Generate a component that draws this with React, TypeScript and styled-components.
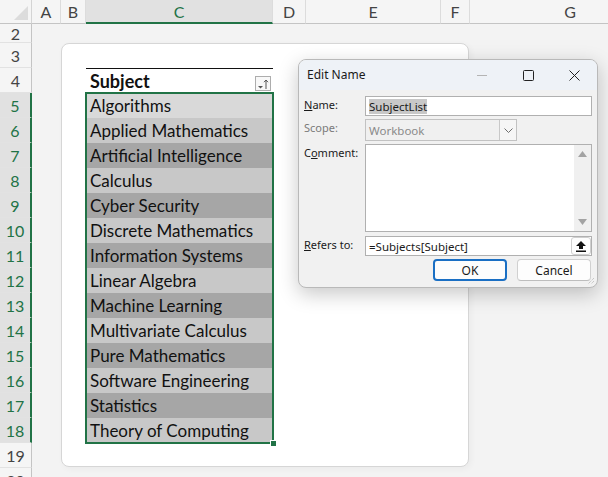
import styled, { createGlobalStyle } from "styled-components";

const GREEN = "#217346";

const subjects = [
  "Algorithms",
  "Applied Mathematics",
  "Artificial Intelligence",
  "Calculus",
  "Cyber Security",
  "Discrete Mathematics",
  "Information Systems",
  "Linear Algebra",
  "Machine Learning",
  "Multivariate Calculus",
  "Pure Mathematics",
  "Software Engineering",
  "Statistics",
  "Theory of Computing",
];

const columns = [
  { label: "A", width: 29 },
  { label: "B", width: 25 },
  { label: "C", width: 187, selected: true },
  { label: "D", width: 33 },
  { label: "E", width: 135 },
  { label: "F", width: 29 },
  { label: "G", width: 201 },
];

const rows = Array.from({ length: 19 }, (_, i) => i + 2);

const GlobalStyle = createGlobalStyle`
  * {
    box-sizing: border-box;
  }

  html,
  body {
    margin: 0;
    height: 100%;
    overflow: hidden;
  }

  body {
    background: #f3f3f3;
    font-family: Lato, "Liberation Sans", sans-serif;
  }
`;

const Sheet = styled.div`
  position: relative;
  width: 608px;
  height: 477px;
  overflow: hidden;
  background: #f3f3f3;
`;

const ColumnBar = styled.div`
  display: flex;
  height: 24px;
  background: #f5f5f5;
`;

const Corner = styled.div`
  width: 32px;
  flex: none;
  border-right: 1px solid #d4d4d4;
  border-bottom: 1px solid #c4c4c4;
  display: flex;
  align-items: flex-end;
  justify-content: flex-end;
  padding: 0 3px 3px 0;
`;

const HeadCell = styled.div<{ $selected?: boolean; $width: number }>`
  width: ${({ $width }) => $width}px;
  flex: none;
  display: flex;
  align-items: center;
  justify-content: center;
  font-size: 16px;
  color: ${({ $selected }) => ($selected ? GREEN : "#444")};
  background: ${({ $selected }) => ($selected ? "#e1e1e1" : "transparent")};
  border-right: 1px solid #dcdcdc;
  border-bottom: ${({ $selected }) =>
    $selected ? `2px solid ${GREEN}` : "1px solid #c4c4c4"};
`;

const Body = styled.div`
  display: flex;
`;

const RowHeader = styled.div`
  width: 32px;
  flex: none;
  display: flex;
  flex-direction: column;
  background: #f5f5f5;
`;

const RowNum = styled.div<{ $selected?: boolean; $short?: boolean }>`
  height: ${({ $short }) => ($short ? 19 : 25)}px;
  flex: none;
  display: flex;
  align-items: center;
  justify-content: center;
  font-size: 16px;
  color: ${({ $selected }) => ($selected ? GREEN : "#444")};
  background: ${({ $selected }) => ($selected ? "#e1e1e1" : "#f5f5f5")};
  border-bottom: 1px solid #e2e2e2;
  border-right: ${({ $selected }) =>
    $selected ? `2px solid ${GREEN}` : "1px solid #c4c4c4"};
`;

const Canvas = styled.div`
  flex: 1;
  padding: 19px 0 0 29px;
`;

const Card = styled.div`
  width: 408px;
  height: 424px;
  background: #fff;
  border: 1px solid #d6d6d6;
  border-radius: 8px;
  box-shadow: 2px 2px 6px rgba(0, 0, 0, 0.04);
  padding: 24px 0 0 24px;
`;

const Table = styled.div`
  width: 187px;
  font-size: 17px;
  color: #111;
`;

const TableHead = styled.div`
  height: 25px;
  border-top: 1px solid #111;
  display: flex;
  align-items: center;
  justify-content: space-between;
  padding: 0 2px 0 4px;
  font-size: 18px;
  font-weight: 700;
`;

const FilterButton = styled.div`
  width: 16px;
  height: 15px;
  align-self: flex-end;
  margin-bottom: 2px;
  border: 1px solid #adadad;
  background: #f8f8f8;
  display: flex;
  align-items: center;
  justify-content: center;
`;

const DataBlock = styled.div`
  position: relative;
  outline: 2px solid ${GREEN};
  outline-offset: -1px;
`;

const DataRow = styled.div<{ $shade: string }>`
  height: 25px;
  line-height: 25px;
  padding-left: 4px;
  white-space: nowrap;
  background: ${({ $shade }) => $shade};
`;

const FillHandle = styled.div`
  position: absolute;
  right: -4px;
  bottom: -4px;
  width: 7px;
  height: 7px;
  background: ${GREEN};
  border: 1px solid #fff;
`;

const Dialog = styled.div`
  position: absolute;
  left: 298px;
  top: 59px;
  width: 300px;
  height: 229px;
  background: #f1f1f1;
  border: 1px solid #b9b9b9;
  border-radius: 8px;
  box-shadow: 0 6px 20px rgba(0, 0, 0, 0.22);
  overflow: hidden;
  font-family: "Noto Sans", "Open Sans", sans-serif;
  font-size: 11px;
  color: #1a1a1a;
`;

const TitleBar = styled.div`
  height: 30px;
  display: flex;
  align-items: center;
  background: #eef2f7;
`;

const TitleText = styled.div`
  flex: 1;
  padding: 0 0 2px 8px;
  font-size: 12px;
`;

const TitleButton = styled.div`
  width: 46px;
  height: 30px;
  display: flex;
  align-items: center;
  justify-content: center;
`;

const DialogBody = styled.div`
  padding: 6px 5px 0 5px;
  display: flex;
  flex-direction: column;
`;

const FieldRow = styled.div<{ $height: number; $gap: number }>`
  display: grid;
  grid-template-columns: 61px 1fr;
  height: ${({ $height }) => $height}px;
  margin-top: ${({ $gap }) => $gap}px;
`;

const Label = styled.div<{ $disabled?: boolean }>`
  padding-top: 1px;
  color: ${({ $disabled }) => ($disabled ? "#7a7a7a" : "#1a1a1a")};
`;

const TextBox = styled.div`
  display: flex;
  align-items: center;
  background: #fff;
  border: 1px solid #b0b0b0;
  padding-left: 3px;
  font-size: 11.5px;
`;

const Selected = styled.span`
  background: #c8c8c8;
`;

const Combo = styled.div`
  width: 152px;
  display: flex;
  align-items: center;
  border: 1px solid #c2c2c2;
  background: #f0f0f0;
  color: #8a8a8a;
  font-size: 11.5px;
  padding-left: 3px;
`;

const ComboText = styled.div`
  flex: 1;
`;

const ComboArrow = styled.div`
  width: 17px;
  height: 100%;
  border-left: 1px solid #c8c8c8;
  background: #f6f6f6;
  display: flex;
  align-items: center;
  justify-content: center;
`;

const Memo = styled.div`
  display: flex;
  justify-content: flex-end;
  background: #fff;
  border: 1px solid #b0b0b0;
`;

const ScrollTrack = styled.div`
  width: 17px;
  background: #f0f0f0;
  display: flex;
  flex-direction: column;
  justify-content: space-between;
  align-items: center;
  padding: 6px 0;
`;

const RefBox = styled(TextBox)`
  justify-content: space-between;
  padding-right: 0;
`;

const CollapseButton = styled.div`
  width: 20px;
  height: 18px;
  background: #fdfdfd;
  border: 1px solid #cfcfcf;
  border-radius: 3px;
  display: flex;
  align-items: center;
  justify-content: center;
`;

const ButtonRow = styled.div`
  display: flex;
  justify-content: flex-end;
  gap: 10px;
  margin-top: 3px;
  padding-right: 1px;
`;

const DialogButton = styled.div<{ $primary?: boolean }>`
  width: 74px;
  height: 22px;
  display: flex;
  align-items: center;
  justify-content: center;
  border-radius: 4px;
  background: #fdfdfd;
  font-size: 12px;
  border: ${({ $primary }) =>
    $primary ? "2px solid #1a6fc4" : "1px solid #d0d0d0"};
  border-bottom-color: ${({ $primary }) => ($primary ? "#1a6fc4" : "#bdbdbd")};
`;

const Grip = styled.svg`
  position: absolute;
  right: 2px;
  bottom: 2px;
`;

const shadeFor = (i: number) => {
  if (i === 0) return "#d9d9d9";
  return i % 2 === 1 ? "#c8c8c8" : "#a6a6a6";
};

export default function App() {
  return (
    <>
      <GlobalStyle />
      <Sheet>
        <ColumnBar>
          <Corner>
            <svg width="14" height="14" viewBox="0 0 14 14">
              <polygon points="0,14 14,0 14,14" fill="#dcdcdc" />
            </svg>
          </Corner>
          {columns.map((c) => (
            <HeadCell key={c.label} $width={c.width} $selected={c.selected}>
              {c.label}
            </HeadCell>
          ))}
        </ColumnBar>
        <Body>
          <RowHeader>
            {rows.map((r) => (
              <RowNum key={r} $short={r === 2} $selected={r >= 5 && r <= 18}>
                {r}
              </RowNum>
            ))}
          </RowHeader>
          <Canvas>
            <Card>
              <Table>
                <TableHead>
                  <span>Subject</span>
                  <FilterButton>
                    <svg width="12" height="12" viewBox="0 0 12 12">
                      <polygon points="1,8 6,8 3.5,10.5" fill="#555" />
                      <path d="M9 11V2M7 4.2L9 2l2 2.2" stroke="#555" strokeWidth="1" fill="none" />
                    </svg>
                  </FilterButton>
                </TableHead>
                <DataBlock>
                  {subjects.map((s, i) => (
                    <DataRow key={s} $shade={shadeFor(i)}>
                      {s}
                    </DataRow>
                  ))}
                  <FillHandle />
                </DataBlock>
              </Table>
            </Card>
          </Canvas>
        </Body>

        <Dialog>
          <TitleBar>
            <TitleText>Edit Name</TitleText>
            <TitleButton>
              <svg width="10" height="10" viewBox="0 0 10 10">
                <path d="M0 5.5h10" stroke="#b4b4b4" strokeWidth="1" />
              </svg>
            </TitleButton>
            <TitleButton>
              <svg width="11" height="11" viewBox="0 0 11 11">
                <rect x="0.5" y="0.5" width="10" height="10" rx="1" fill="none" stroke="#222" />
              </svg>
            </TitleButton>
            <TitleButton>
              <svg width="11" height="11" viewBox="0 0 11 11">
                <path d="M0.5 0.5l10 10M10.5 0.5l-10 10" stroke="#222" strokeWidth="1" />
              </svg>
            </TitleButton>
          </TitleBar>
          <DialogBody>
            <FieldRow $height={20} $gap={0}>
              <Label>
                <u>N</u>ame:
              </Label>
              <TextBox>
                <Selected>SubjectList</Selected>
              </TextBox>
            </FieldRow>
            <FieldRow $height={22} $gap={3}>
              <Label $disabled>Scope:</Label>
              <Combo>
                <ComboText>Workbook</ComboText>
                <ComboArrow>
                  <svg width="9" height="5" viewBox="0 0 9 5">
                    <path d="M0.5 0.5l4 4 4-4" stroke="#6e6e6e" fill="none" />
                  </svg>
                </ComboArrow>
              </Combo>
            </FieldRow>
            <FieldRow $height={88} $gap={3}>
              <Label>
                C<u>o</u>mment:
              </Label>
              <Memo>
                <ScrollTrack>
                  <svg width="9" height="6" viewBox="0 0 9 6">
                    <polygon points="0,6 4.5,0 9,6" fill="#a3a3a3" />
                  </svg>
                  <svg width="9" height="6" viewBox="0 0 9 6">
                    <polygon points="0,0 9,0 4.5,6" fill="#a3a3a3" />
                  </svg>
                </ScrollTrack>
              </Memo>
            </FieldRow>
            <FieldRow $height={20} $gap={4}>
              <Label>
                <u>R</u>efers to:
              </Label>
              <RefBox>
                <span>=Subjects[Subject]</span>
                <CollapseButton>
                  <svg width="10" height="11" viewBox="0 0 10 11">
                    <polygon points="5,0 10,5 7,5 7,8 3,8 3,5 0,5" fill="#111" />
                    <rect x="0" y="9.5" width="10" height="1.5" fill="#111" />
                  </svg>
                </CollapseButton>
              </RefBox>
            </FieldRow>
            <ButtonRow>
              <DialogButton $primary>OK</DialogButton>
              <DialogButton>Cancel</DialogButton>
            </ButtonRow>
          </DialogBody>
          <Grip width="10" height="10" viewBox="0 0 10 10">
            <path d="M9 3L3 9M9 6L6 9" stroke="#b5b5b5" strokeWidth="1" strokeDasharray="1 1" />
          </Grip>
        </Dialog>
      </Sheet>
    </>
  );
}
